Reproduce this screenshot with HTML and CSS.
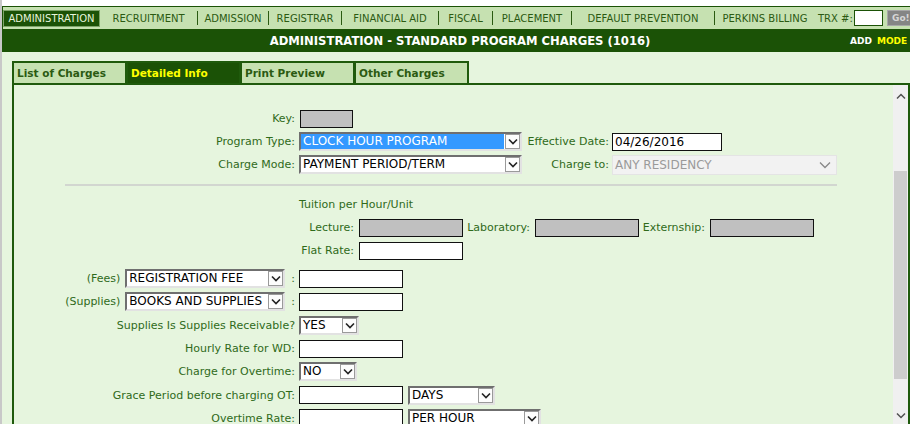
FILE: index.html
```html
<!DOCTYPE html>
<html>
<head>
<meta charset="utf-8">
<link rel="stylesheet" href="styles.css">
</head>
<body>
<div class="frame">
  <div class="topgap"></div>
  <div class="nav">
    <div class="nav-item active">ADMINISTRATION</div>
    <div class="nav-item w-rec">RECRUITMENT</div>
    <span class="sep"></span>
    <div class="nav-item w-adm">ADMISSION</div>
    <span class="sep"></span>
    <div class="nav-item w-reg">REGISTRAR</div>
    <span class="sep"></span>
    <div class="nav-item w-fin">FINANCIAL AID</div>
    <span class="sep"></span>
    <div class="nav-item w-fis">FISCAL</div>
    <span class="sep"></span>
    <div class="nav-item w-pla">PLACEMENT</div>
    <span class="sep"></span>
    <div class="nav-item w-def">DEFAULT PREVENTION</div>
    <span class="sep"></span>
    <div class="nav-item w-per">PERKINS BILLING</div>
    <div class="trx">TRX #:<span class="trx-input"></span><span class="go">Go!</span></div>
  </div>
  <div class="titlebar">
    <div class="title">ADMINISTRATION - STANDARD PROGRAM CHARGES (1016)</div>
    <div class="mode"><span class="add">ADD</span><span class="modetxt">MODE</span></div>
  </div>
  <div class="main">
    <div class="tabs">
      <div class="tab">List of Charges</div>
      <div class="tab active">Detailed Info</div>
      <div class="tab">Print Preview</div>
      <div class="tab">Other Charges</div>
    </div>
    <div class="panel">
      <div class="content">
        <div class="top-grid">
          <div class="lbl">Key:</div>
          <div class="fld"><span class="inp gray key"></span></div>
          <div class="lbl2"></div>
          <div class="fld"></div>

          <div class="lbl">Program Type:</div>
          <div class="fld">
            <span class="sel w223"><span class="txt hl">CLOCK HOUR PROGRAM</span><span class="btn"><svg width="10" height="7" viewBox="0 0 10 7"><path d="M1 1.5 L5 5.5 L9 1.5" fill="none" stroke="#222" stroke-width="1.6"/></svg></span></span>
          </div>
          <div class="lbl2">Effective Date:</div>
          <div class="fld"><span class="inp date">04/26/2016</span></div>

          <div class="lbl">Charge Mode:</div>
          <div class="fld">
            <span class="sel w223"><span class="txt">PAYMENT PERIOD/TERM</span><span class="btn"><svg width="10" height="7" viewBox="0 0 10 7"><path d="M1 1.5 L5 5.5 L9 1.5" fill="none" stroke="#222" stroke-width="1.6"/></svg></span></span>
          </div>
          <div class="lbl2">Charge to:</div>
          <div class="fld">
            <span class="dsel"><span class="txt">ANY RESIDENCY</span><svg width="12" height="8" viewBox="0 0 12 8"><path d="M1 1.5 L6 6.5 L11 1.5" fill="none" stroke="#888" stroke-width="1.3"/></svg></span>
          </div>
        </div>

        <div class="rule"></div>

        <div class="tuition">
          <div class="tuition-title">Tuition per Hour/Unit</div>
          <div class="slbl">Lecture:</div>
          <span class="inp gray w104"></span>
          <div class="slbl">Laboratory:</div>
          <span class="inp gray w104"></span>
          <div class="slbl">Externship:</div>
          <span class="inp gray w104"></span>
          <div class="slbl">Flat Rate:</div>
          <span class="inp w104"></span>
        </div>

        <div class="bottom-grid">
          <div class="lbl">(Fees)<span class="sel w160 ml5"><span class="txt">REGISTRATION FEE</span><span class="btn"><svg width="10" height="7" viewBox="0 0 10 7"><path d="M1 1.5 L5 5.5 L9 1.5" fill="none" stroke="#222" stroke-width="1.6"/></svg></span></span><span class="colon">:</span></div>
          <div class="fld"><span class="inp w104"></span></div>

          <div class="lbl">(Supplies)<span class="sel w160 ml5"><span class="txt">BOOKS AND SUPPLIES</span><span class="btn"><svg width="10" height="7" viewBox="0 0 10 7"><path d="M1 1.5 L5 5.5 L9 1.5" fill="none" stroke="#222" stroke-width="1.6"/></svg></span></span><span class="colon">:</span></div>
          <div class="fld"><span class="inp w104"></span></div>

          <div class="lbl">Supplies Is Supplies Receivable?</div>
          <div class="fld"><span class="sel w60"><span class="txt">YES</span><span class="btn"><svg width="10" height="7" viewBox="0 0 10 7"><path d="M1 1.5 L5 5.5 L9 1.5" fill="none" stroke="#222" stroke-width="1.6"/></svg></span></span></div>

          <div class="lbl">Hourly Rate for WD:</div>
          <div class="fld"><span class="inp w104"></span></div>

          <div class="lbl">Charge for Overtime:</div>
          <div class="fld"><span class="sel w58"><span class="txt">NO</span><span class="btn"><svg width="10" height="7" viewBox="0 0 10 7"><path d="M1 1.5 L5 5.5 L9 1.5" fill="none" stroke="#222" stroke-width="1.6"/></svg></span></span></div>

          <div class="lbl">Grace Period before charging OT:</div>
          <div class="fld"><span class="inp w104"></span><span class="sel w87"><span class="txt">DAYS</span><span class="btn"><svg width="10" height="7" viewBox="0 0 10 7"><path d="M1 1.5 L5 5.5 L9 1.5" fill="none" stroke="#222" stroke-width="1.6"/></svg></span></span></div>

          <div class="lbl">Overtime Rate:</div>
          <div class="fld"><span class="inp w104"></span><span class="sel w133"><span class="txt">PER HOUR</span><span class="btn"><svg width="10" height="7" viewBox="0 0 10 7"><path d="M1 1.5 L5 5.5 L9 1.5" fill="none" stroke="#222" stroke-width="1.6"/></svg></span></span></div>
        </div>
      </div>
      <div class="scrollbar">
        <div class="sb-arrow"><svg width="10" height="7" viewBox="0 0 10 7"><path d="M1 5.5 L5 1.5 L9 5.5" fill="none" stroke="#505050" stroke-width="1.5"/></svg></div>
        <div class="sb-track"><div class="sb-thumb"></div></div>
        <div class="sb-arrow"><svg width="10" height="7" viewBox="0 0 10 7"><path d="M1 1.5 L5 5.5 L9 1.5" fill="none" stroke="#505050" stroke-width="1.5"/></svg></div>
      </div>
    </div>
  </div>
</div>
</body>
</html>
```

FILE: styles.css
```css
html, body {
  margin: 0;
  padding: 0;
  background: #ffffff;
  overflow: hidden;
  height: 424px;
}
body {
  font-family: "DejaVu Sans", Verdana, sans-serif;
  font-size: 11px;
  color: #2f6a1a;
}
.frame {
  border-left: 2px solid #c8c8c8;
  width: 908px;
  height: 424px;
  display: flex;
  flex-direction: column;
}
.topgap {
  height: 6px;
  background: #ffffff;
}
.nav {
  display: flex;
  align-items: center;
  background: #c6e1b1;
  border-top: 1px solid #1b5206;
  border-left: 1px solid #1b5206;
  box-sizing: border-box;
  height: 23px;
  font-size: 10px;
  color: #2b5a12;
  white-space: nowrap;
  overflow: hidden;
}
.nav-item {
  text-align: center;
  flex: none;
}
.nav-item.active {
  width: 95px;
  height: 15px;
  line-height: 15px;
  background: #1b5206;
  color: #e8f4dc;
  border: 1px solid #7ea56a;
}
.w-rec { width: 97px; }
.w-adm { width: 70px; }
.w-reg { width: 72px; }
.w-fin { width: 96px; }
.w-fis { width: 53px; }
.w-pla { width: 78px; }
.w-def { width: 142px; }
.w-per { width: 100px; }
.sep {
  width: 1px;
  height: 14px;
  background: #2b5a12;
  flex: none;
}
.trx {
  display: flex;
  align-items: center;
  margin-left: 3px;
}
.trx-input {
  width: 29px;
  height: 16px;
  box-sizing: border-box;
  background: #ffffff;
  border: 1px solid #1b5206;
  margin-left: 1px;
}
.go {
  margin-left: 4px;
  width: 28px;
  height: 16px;
  box-sizing: border-box;
  background: #858585;
  border: 1px solid #a8a8a8;
  color: #d6d6d6;
  font-weight: bold;
  font-size: 9px;
  line-height: 14px;
  text-align: center;
}
.titlebar {
  display: flex;
  align-items: center;
  height: 23px;
  background: #1b5206;
  color: #ffffff;
  white-space: nowrap;
}
.title {
  flex: 1;
  text-align: center;
  padding-left: 68px;
  font-weight: bold;
  font-size: 11.6px;
}
.mode {
  display: flex;
  font-weight: bold;
  font-size: 9px;
  width: 60px;
}
.add { color: #ffffff; margin-right: 5px; }
.modetxt { color: #ffff00; }
.main {
  flex: 1;
  background: #e6f5de;
  padding: 9px 0 0 10px;
  display: flex;
  flex-direction: column;
  min-height: 0;
}
.tabs {
  display: flex;
  height: 22px;
}
.tab {
  width: 108px;
  box-sizing: content-box;
  background: #c6e1b1;
  border: 2px solid #1f5a0c;
  border-bottom: none;
  border-right-width: 1px;
  font-weight: bold;
  font-size: 10.5px;
  line-height: 20px;
  padding-left: 3px;
  color: #2b5a12;
}
.tab:last-child { border-right-width: 2px; }
.tab.active {
  background: #1b5206;
  color: #ffff00;
}
.panel {
  flex: 1;
  display: flex;
  border-top: 2px solid #1f5a0c;
  border-left: 2px solid #1f5a0c;
  border-right: 2px solid #1f5a0c;
  min-height: 0;
}
.content {
  flex: 1;
  padding-top: 22px;
}
.top-grid {
  display: grid;
  grid-template-columns: 285px 223px 90px 225px;
  grid-auto-rows: 23px;
  align-items: center;
}
.lbl {
  text-align: right;
  padding-right: 4px;
  white-space: nowrap;
  display: flex;
  justify-content: flex-end;
  align-items: center;
}
.lbl2 {
  text-align: right;
  padding-right: 3px;
  white-space: nowrap;
}
.fld {
  display: flex;
  align-items: center;
  gap: 5px;
}
.inp {
  display: inline-block;
  box-sizing: border-box;
  height: 18px;
  border: 1px solid #111;
  background: #ffffff;
  font-size: 12px;
  line-height: 16px;
  padding-left: 2px;
  color: #000;
}
.inp.gray { background: #c0c0c0; }
.inp.key { width: 53px; margin-left: 1px; height: 18px; }
.inp.date { width: 110px; }
.w104 { width: 104px; }
.sel {
  display: inline-flex;
  box-sizing: border-box;
  height: 19px;
  border: 2px solid;
  border-color: #6f6f6f #e2e2e2 #e2e2e2 #6f6f6f;
  background: #ffffff;
  color: #000;
  font-size: 12px;
  align-items: stretch;
}
.sel .txt {
  flex: 1;
  padding-left: 2px;
  line-height: 15px;
  white-space: nowrap;
  overflow: hidden;
  text-align: left;
}
.sel .txt.hl {
  background: #3399ff;
  color: #ffffff;
  margin: 0 1px 0 0;
}
.sel .btn {
  width: 15px;
  box-sizing: border-box;
  border: 1px solid #9a9a9a;
  background: #fdfdfd;
  display: flex;
  align-items: center;
  justify-content: center;
}
.w223 { width: 223px; }
.w160 { width: 160px; }
.w60 { width: 60px; }
.w58 { width: 58px; }
.w87 { width: 87px; }
.w133 { width: 133px; }
.ml5 { margin-left: 5px; }
.colon { margin-left: 6px; }
.dsel {
  display: inline-flex;
  align-items: center;
  box-sizing: border-box;
  width: 225px;
  height: 20px;
  background: #f2f2f2;
  border: 1px solid #e4e4e4;
  color: #9a9a9a;
  font-size: 12px;
  padding: 0 5px 0 2px;
}
.dsel .txt { flex: 1; }
.rule {
  margin: 8px 0 0 51px;
  width: 772px;
  height: 2px;
  background: #d2d6d0;
}
.tuition {
  margin: 7px 0 0 285px;
  display: grid;
  grid-template-columns: 60px 104px 72px 104px 71px 104px;
  grid-auto-rows: 23px;
  align-items: center;
  justify-items: start;
}
.tuition-title {
  grid-column: 1 / -1;
}
.slbl {
  justify-self: end;
  padding-right: 5px;
  white-space: nowrap;
}
.bottom-grid {
  margin-top: 5px;
  display: grid;
  grid-template-columns: 285px auto;
  grid-auto-rows: 23.3px;
  align-items: center;
}
.scrollbar {
  width: 15px;
  background: #f0f0f0;
  display: flex;
  flex-direction: column;
}
.sb-arrow {
  height: 17px;
  display: flex;
  align-items: center;
  justify-content: center;
  padding-top: 3px;
}
.sb-track {
  flex: 1;
  padding: 66px 1px 0 1px;
}
.sb-thumb {
  height: 208px;
  background: #cdcdcd;
}
```
